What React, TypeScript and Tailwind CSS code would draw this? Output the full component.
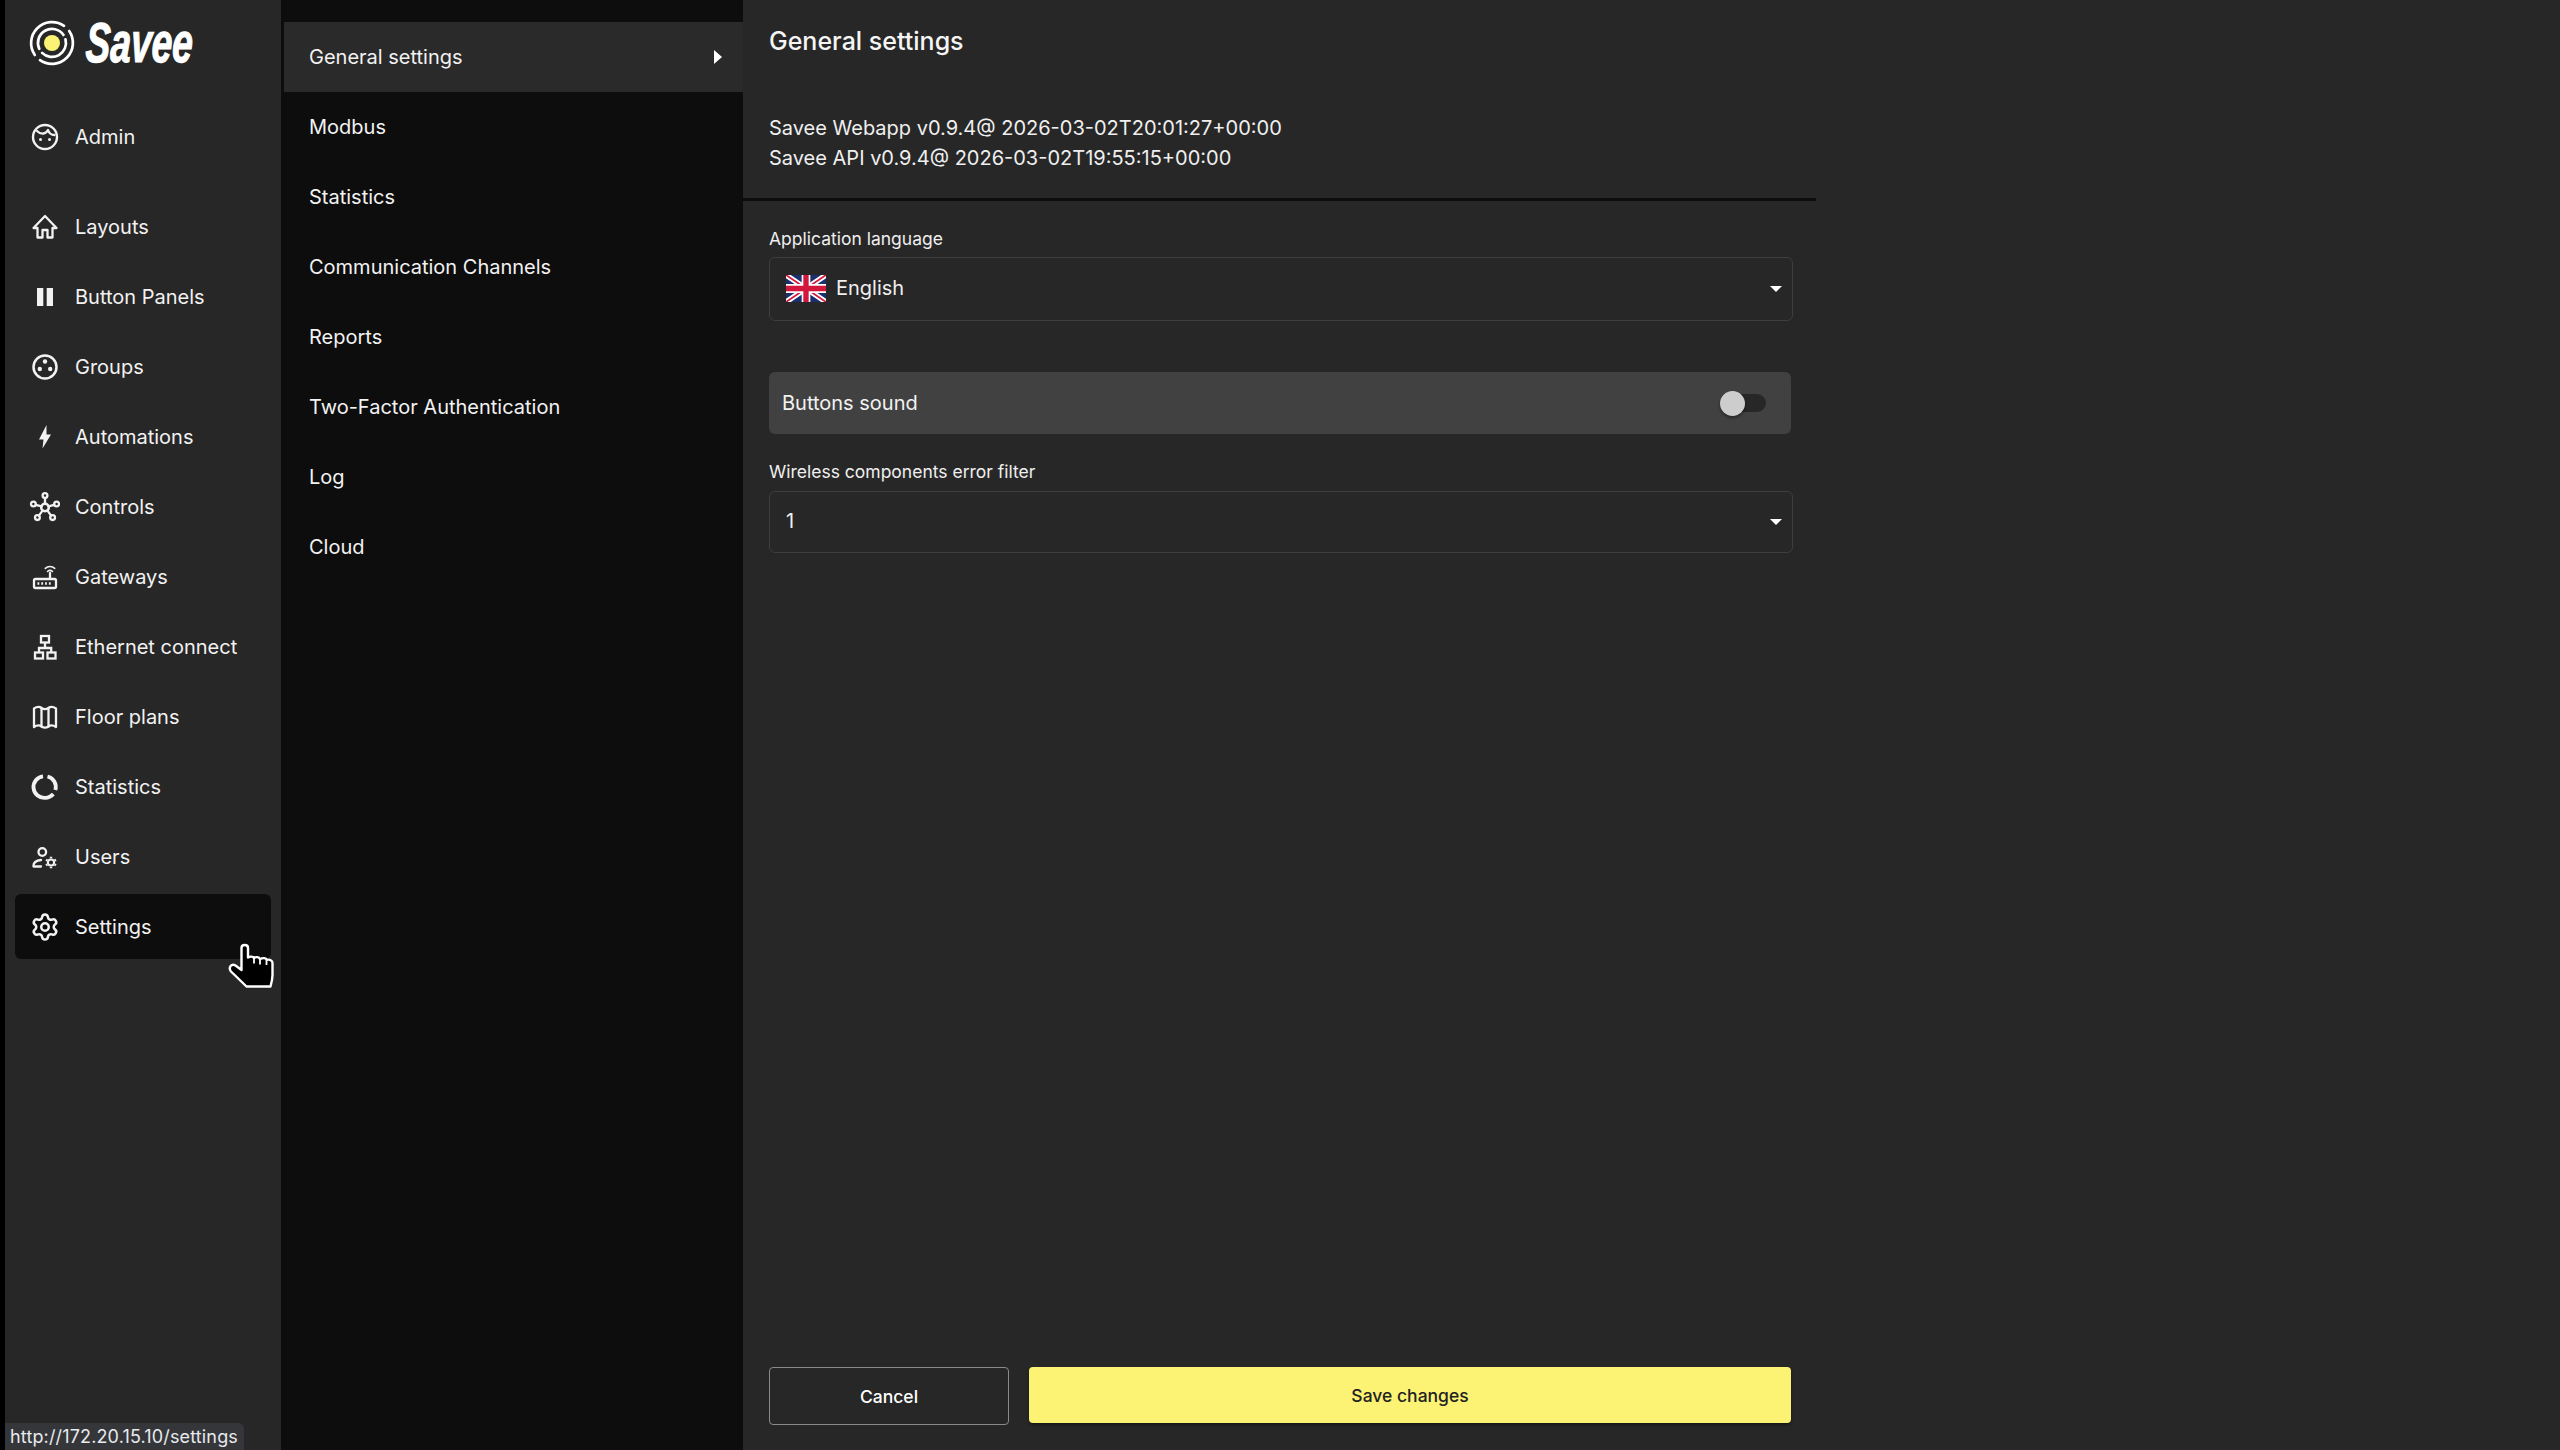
import { Settings } from "lucide-react";
import type { ReactNode } from "react";

const Icon = ({ children }: { children: ReactNode }) => (
  <svg viewBox="0 0 30 30" className="w-[30px] h-[30px] shrink-0" fill="none" stroke="currentColor" strokeWidth="2.300" strokeLinecap="round" strokeLinejoin="round">
    {children}
  </svg>
);

const navItems: { label: string; icon: ReactNode }[] = [
  {
    label: "Layouts",
    icon: (
      <Icon>
        <path d="M15 4 3.500 16H7.500V25.500H12.500V18H17.500V25.500H22.500V16H26.500L15 4Z" />
      </Icon>
    ),
  },
  {
    label: "Button Panels",
    icon: (
      <Icon>
        <path d="M7 6h6.300v18H7zM16.700 6H23v18h-6.300z" fill="currentColor" stroke="none" />
      </Icon>
    ),
  },
  {
    label: "Groups",
    icon: (
      <Icon>
        <circle cx="15" cy="15" r="11.500" strokeWidth="2.500" />
        <circle cx="15" cy="9.500" r="2.200" fill="currentColor" stroke="none" />
        <circle cx="9.800" cy="17" r="2.200" fill="currentColor" stroke="none" />
        <circle cx="20.200" cy="17" r="2.200" fill="currentColor" stroke="none" />
      </Icon>
    ),
  },
  {
    label: "Automations",
    icon: (
      <Icon>
        <path d="M16.500 3 9 17.500h4.500L12.500 26.500 21 12.500h-4.500L16.500 3Z" fill="currentColor" stroke="none" />
      </Icon>
    ),
  },
  {
    label: "Controls",
    icon: (
      <Icon>
        <circle cx="15" cy="15.500" r="3.800" strokeWidth="2.500" />
        <circle cx="15" cy="3.600" r="2.400" />
        <circle cx="3.400" cy="12" r="2.400" />
        <circle cx="26.600" cy="12" r="2.400" />
        <circle cx="7.400" cy="25.600" r="2.400" />
        <circle cx="22.600" cy="25.600" r="2.400" />
        <path d="M15 6.100v5.800M5.800 12.800l5.800 1.600M24.200 12.800l-5.800 1.600M8.900 23.600l3.800-5.200M21.100 23.600l-3.800-5.200" />
      </Icon>
    ),
  },
  {
    label: "Gateways",
    icon: (
      <Icon>
        <rect x="4" y="17" width="22" height="9" rx="1.500" />
        <path d="M7.500 21.500h1.800M11.300 21.500h1.800M15.100 21.500h1.800M18.900 21.500h1.800" strokeWidth="2.600" strokeLinecap="butt" />
        <path d="M20 16.500v-5.500" />
        <path d="M17.500 9.500a3.600 3.600 0 0 1 5 0M15.300 6.400a6.800 6.800 0 0 1 9.400 0" strokeWidth="1.600" />
      </Icon>
    ),
  },
  {
    label: "Ethernet connect",
    icon: (
      <Icon>
        <rect x="11" y="4" width="8" height="6.500" strokeLinejoin="miter" />
        <rect x="5" y="20.500" width="8" height="6" strokeLinejoin="miter" />
        <rect x="17.500" y="20.500" width="8" height="6" strokeLinejoin="miter" />
        <path d="M15 10.500v5M9 20.500v-4.500h12.200v4.500" strokeLinecap="butt" strokeLinejoin="miter" />
      </Icon>
    ),
  },
  {
    label: "Floor plans",
    icon: (
      <Icon>
        <path d="M4 6.500c3-2 5.500-2 7.500-.5 2.500 1.500 4.500 1.500 7 0 2-1.500 4.500-1.500 7.500.5v18.500c-3-2-5.500-2-7.500-.5-2.500 1.500-4.500 1.500-7 0-2-1.500-4.500-1.500-7.500.5V6.500Z" />
        <path d="M11.500 6v18.500M18.500 6v18.500" />
      </Icon>
    ),
  },
  {
    label: "Statistics",
    icon: (
      <Icon>
        <path d="M13 4.300A10.800 10.800 0 0 0 15 25.800a10.800 10.800 0 0 0 8.300-3.800" strokeWidth="3.800" strokeLinecap="butt" />
        <path d="M17.500 4.500A10.800 10.800 0 0 1 25.400 18" strokeWidth="3.800" strokeLinecap="butt" />
      </Icon>
    ),
  },
  {
    label: "Users",
    icon: (
      <Icon>
        <circle cx="12.300" cy="10" r="3.800" />
        <path d="M3.500 24v-.5c0-3 3.500-5 7.500-5.500M3.500 24.500H11" />
        <circle cx="21" cy="20.500" r="3.100" strokeWidth="2" />
        <path d="M21 14.800v1.500M21 24.700v1.500M16 17.700l1.400.8M24.600 22.500l1.400.8M16 23.300l1.400-.8M24.600 18.500l1.400-.8" strokeWidth="2.400" strokeLinecap="butt" />
      </Icon>
    ),
  },
];

const subItems = ["Modbus", "Statistics", "Communication Channels", "Reports", "Two-Factor Authentication", "Log", "Cloud"];

const NavRow = ({ label, icon, active }: { label: string; icon: ReactNode; active?: boolean }) => (
  <div className={`h-[65px] mb-[5px] flex items-center pl-[15px] gap-[15px] text-[20px] rounded-[6px] text-[#f2f2f2] ${active ? "bg-[#0d0d0d]" : ""}`}>
    {icon}
    <span>{label}</span>
  </div>
);

const SelectBox = ({ children }: { children: ReactNode }) => (
  <div className="w-[1024px] flex items-center justify-between pl-[16px] pr-[10px] border-[1.500px] border-[#3e3e3e] rounded-[6px] text-[20px] text-[#efefef] h-full">
    <div className="flex items-center gap-[10px] -mt-[2px]">{children}</div>
    <div className="w-0 h-0 border-l-[6px] border-r-[6px] border-t-[6px] border-l-transparent border-r-transparent border-t-white" />
  </div>
);

const Flag = () => (
  <svg viewBox="0 0 60 40" className="w-[40px] h-[27px] mt-[1px]" preserveAspectRatio="none">
    <rect width="60" height="40" fill="#1a2f6e" />
    <path d="M0 0l60 40M60 0 0 40" stroke="#fff" strokeWidth="8" />
    <path d="M0 0l60 40M60 0 0 40" stroke="#d3163c" strokeWidth="2.600" />
    <path d="M30 0v40M0 20h60" stroke="#fff" strokeWidth="13" />
    <path d="M30 0v40M0 20h60" stroke="#d3163c" strokeWidth="8" />
  </svg>
);

const Logo = () => (
  <div className="h-[90px] pl-[24px] pt-[20px] flex items-start gap-[8px]">
    <svg viewBox="0 0 46 46" className="w-[46px] h-[46px] shrink-0" fill="none" stroke="#fff" strokeLinecap="round">
      <circle cx="23" cy="23" r="8" fill="#fcf374" stroke="none" />
      <path d="M36.500 19.400A14 14 0 0 1 13.100 32.900M10.300 28.900A14 14 0 0 1 34.500 15" strokeWidth="2.700" />
      <path d="M40.200 11A21 21 0 0 1 11 40.200M5.800 35A21 21 0 0 1 35 5.800" strokeWidth="2.700" />
    </svg>
    <span className="font-['Liberation_Sans'] font-bold italic text-[56px] leading-[46px] text-white origin-left scale-x-[0.66] -skew-x-[4deg] ml-[3px] [-webkit-text-stroke:1.200px_white]">
      Savee
    </span>
  </div>
);

const HandCursor = () => (
  <svg viewBox="0 0 46 46" className="absolute left-[228px] top-[942px] w-[46px] h-[46px]">
    <path
      d="M13.500 6C13.500 2 20 2 20 6V15.500C22 14 25 14.500 26 16 28 14.500 31 15 32 17 35 15.500 38 16 39 18 41.500 17 44.500 18.500 44.500 21V33C44.500 37 43.500 41 42.500 44.500H18.500L3 29.500C0 25.500 3.500 21 7.500 23.500L13.500 28Z"
      fill="#000"
      stroke="#fff"
      strokeWidth="2.400"
      strokeLinejoin="round"
    />
    <path d="M26 16v5.500M32 17v5.500M38.500 18v5" stroke="#fff" strokeWidth="1.800" fill="none" />
  </svg>
);

export default function App() {
  return (
    <div className="relative w-[2560px] h-[1450px] overflow-hidden flex bg-black font-[Inter,sans-serif] text-white">
      <div className="w-[5px] shrink-0 bg-black" />

      {/* main nav */}
      <aside className="w-[276px] shrink-0 bg-[#272727]">
        <Logo />
        <div className="px-[10px]">
          <div className="pt-[14px] mb-[25px]">
            <NavRow
              label="Admin"
              icon={
                <Icon>
                  <circle cx="15" cy="15" r="12" strokeWidth="2.400" />
                  <path d="M7 9c4 4 9 3 11-1 1 3 3 5 6.500 5" />
                  <circle cx="10.500" cy="17.500" r="1.500" fill="currentColor" stroke="none" />
                  <circle cx="19.500" cy="17.500" r="1.500" fill="currentColor" stroke="none" />
                </Icon>
              }
            />
          </div>
          {navItems.map((n) => (
            <NavRow key={n.label} label={n.label} icon={n.icon} />
          ))}
          <NavRow
            label="Settings"
            active
            icon={<Settings className="w-[30px] h-[30px] shrink-0" strokeWidth={2} />}
          />
        </div>
      </aside>

      {/* settings sub nav */}
      <nav className="w-[462px] shrink-0 bg-[#0d0d0d] pt-[22px] pl-[3px] text-[20px] text-[#f2f2f2]">
        <div className="h-[70px] bg-[#2a2a2a] flex items-center justify-between pl-[25px] pr-[21px]">
          <span>General settings</span>
          <div className="w-0 h-0 border-t-[7px] border-b-[7px] border-l-[8px] border-t-transparent border-b-transparent border-l-white" />
        </div>
        {subItems.map((s) => (
          <div key={s} className="h-[70px] flex items-center pl-[25px]">
            {s}
          </div>
        ))}
      </nav>

      {/* content */}
      <main className="flex-1 bg-[#272727] flex flex-col">
        <div className="w-[1073px] h-[201px] pl-[26px] border-b-[3px] border-[#0d0d0d]">
          <h1 className="pt-[24px] text-[25px] leading-[34px] font-medium text-[#f5f5f5]">General settings</h1>
          <div className="mt-[55px] text-[20px] leading-[30px] text-[#efefef]">
            <p>Savee Webapp v0.9.4@ 2026-03-02T20:01:27+00:00</p>
            <p>Savee API v0.9.4@ 2026-03-02T19:55:15+00:00</p>
          </div>
        </div>

        <div className="pl-[26px] flex-1 flex flex-col">
          <label className="mt-[27px] h-[29px] leading-[22px] text-[17.500px] text-[#efefef]">Application language</label>
          <div className="h-[64px]">
            <SelectBox>
              <Flag />
              <span>English</span>
            </SelectBox>
          </div>
          <div className="mt-[51px] w-[1022px] h-[62px] bg-[#414141] rounded-[6px] flex items-center justify-between pl-[13px] pr-[25px] text-[20px] text-[#f2f2f2]">
            <span>Buttons sound</span>
            <div className="relative w-[42px] h-[18px] rounded-full bg-[#272727]">
              <div className="absolute -left-[4px] -top-[3.500px] w-[25px] h-[25px] rounded-full bg-[#cdcdcd] shadow-[0_2px_3px_rgba(0,0,0,0.4)]" />
            </div>
          </div>
          <label className="mt-[27px] h-[30px] leading-[22px] text-[17.500px] text-[#efefef]">Wireless components error filter</label>
          <div className="h-[62px]">
            <SelectBox>
              <span>1</span>
            </SelectBox>
          </div>

          <div className="mt-auto mb-[25px] flex items-start gap-[20px] w-[1022px]">
            <button className="w-[240px] h-[58px] pt-[2px] border-[1.500px] border-[#8a8a8a] rounded-[4px] text-[17.500px] font-medium text-white">
              Cancel
            </button>
            <button className="flex-1 h-[56px] pt-[2px] bg-[#fcf374] rounded-[4px] text-[17.500px] font-medium text-[#222] shadow-[0_2px_3px_rgba(0,0,0,0.4)]">
              Save changes
            </button>
          </div>
        </div>
      </main>

      {/* browser link preview + pointer */}
      <div className="absolute left-[5px] bottom-0 h-[27px] w-[239px] bg-[#35363a] rounded-tr-[6px] pl-[5px] flex items-center text-[18px] tracking-[0.15px] text-[#e8eaed]">
        http://172.20.15.10/settings
      </div>
      <HandCursor />
    </div>
  );
}
